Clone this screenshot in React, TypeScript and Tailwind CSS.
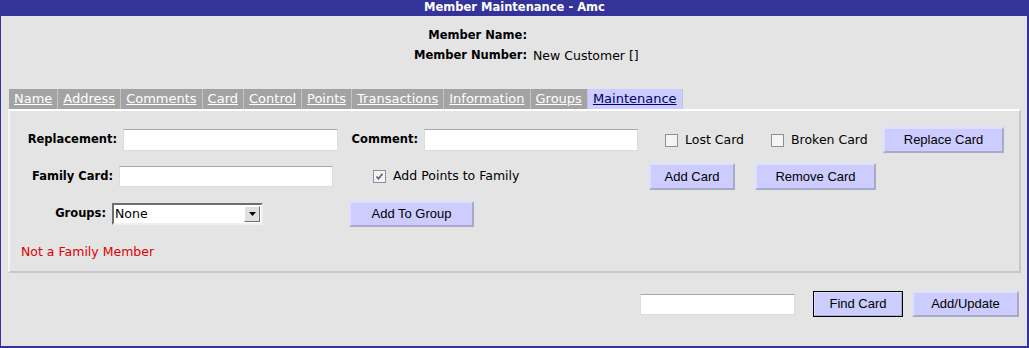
import React from "react";

const tabs = [
  "Name",
  "Address",
  "Comments",
  "Card",
  "Control",
  "Points",
  "Transactions",
  "Information",
  "Groups",
  "Maintenance",
];

const font = { fontFamily: '"DejaVu Sans", Verdana, sans-serif' };

function Btn({ label, w, h, focused }: { label: string; w: string; h: string; focused?: boolean }) {
  return (
    <button
      className={
        "bg-[#ccccff] text-black text-[13px] font-['Liberation_Sans',Arial,sans-serif] border-2 border-t-[#dedeff] border-l-[#dedeff] border-r-[#a9a9c8] border-b-[#a9a9c8] " +
        w +
        " " +
        h +
        (focused ? " outline outline-1 outline-black -outline-offset-1" : "")
      }
    >
      {label}
    </button>
  );
}

function Check({ checked }: { checked?: boolean }) {
  return (
    <span className="w-[13px] h-[13px] border border-[#8f8f8f] bg-[#f4f4f4] flex items-center justify-center shrink-0">
      {checked && (
        <svg width="9" height="9" viewBox="0 0 9 9">
          <path d="M1.5 4.5 L3.5 6.8 L7.5 1.8" stroke="#4a5a8a" strokeWidth="1.6" fill="none" />
        </svg>
      )}
    </span>
  );
}

function TextBox({ w, h }: { w: string; h: string }) {
  return <div className={"bg-white border border-[#dcdcdc] border-t-[#a8a8a8] " + w + " " + h} />;
}

export default function App() {
  return (
    <div className="w-[1029px] h-[348px] bg-[#333399] flex flex-col text-[12.5px] text-black" style={font}>
      <div className="h-[16px] flex items-center justify-center text-white font-bold text-[11.5px]">
        Member Maintenance - Amc
      </div>
      <div className="ml-[1px] mr-[2px] mb-[2px] flex-1 bg-[#e4e4e4] flex flex-col">
        <div className="grid grid-cols-[526px_auto] gap-x-[6px] mt-[10px]">
          <div className="h-[20px] flex items-center justify-end font-bold text-[11.5px]">Member Name:</div>
          <div className="h-[20px]" />
          <div className="h-[20px] flex items-center justify-end font-bold text-[11.5px]">Member Number:</div>
          <div className="h-[20px] flex items-center">New Customer []</div>
        </div>

        <div className="flex ml-[8px] mt-[23px] h-[20px] text-[13px]">
          {tabs.map((t) => {
            const active = t === "Maintenance";
            return (
              <div
                key={t}
                className={
                  "px-[5px] flex items-center underline border-r border-[#c4c4c4] " +
                  (active ? "bg-[#ccccff] text-[#000066]" : "bg-[#a3a3a3] text-white")
                }
              >
                {t}
              </div>
            );
          })}
        </div>

        <div className="ml-[7px] mr-[6px] border-2 border-t-white border-l-[#f4f4f4] border-r-[#c8c8c8] border-b-[#c8c8c8] pt-[16px] pb-[12px]">
          <div className="flex items-center h-[26px]">
            <span className="w-[113px] text-right pr-[6px] font-bold text-[11.5px]">Replacement:</span>
            <TextBox w="w-[215px]" h="h-[22px]" />
            <span className="w-[86px] text-right pr-[6px] font-bold text-[11.5px]">Comment:</span>
            <TextBox w="w-[214px]" h="h-[22px]" />
            <div className="ml-[27px] w-[106px] flex items-center gap-[7px]">
              <Check />
              <span>Lost Card</span>
            </div>
            <div className="w-[112px] flex items-center gap-[7px]">
              <Check />
              <span>Broken Card</span>
            </div>
            <Btn label="Replace Card" w="w-[121px]" h="h-[26px]" />
          </div>

          <div className="flex items-center h-[27px] mt-[10px]">
            <span className="w-[109px] text-right pr-[6px] font-bold text-[11.5px]">Family Card:</span>
            <TextBox w="w-[214px]" h="h-[21px]" />
            <div className="ml-[40px] w-[276px] flex items-center gap-[7px]">
              <Check checked />
              <span>Add Points to Family</span>
            </div>
            <Btn label="Add Card" w="w-[86px]" h="h-[27px]" />
            <div className="ml-[20px]">
              <Btn label="Remove Card" w="w-[121px]" h="h-[27px]" />
            </div>
          </div>

          <div className="flex items-center h-[26px] mt-[11px]">
            <span className="w-[102px] text-right pr-[6px] font-bold text-[11.5px]">Groups:</span>
            <div className="w-[151px] h-[22px] bg-white border-2 border-t-[#6e6e6e] border-l-[#6e6e6e] border-r-[#f0f0f0] border-b-[#f0f0f0] flex items-center">
              <span className="flex-1 pl-[1px] text-[12.5px]">None</span>
              <span className="w-[16px] h-[16px] mr-[1px] bg-[#e0e0e0] border border-t-white border-l-white border-r-[#707070] border-b-[#707070] flex items-center justify-center">
                <svg width="7" height="4" viewBox="0 0 7 4">
                  <path d="M0 0 H7 L3.5 4 Z" fill="#000" />
                </svg>
              </span>
            </div>
            <div className="ml-[86px]">
              <Btn label="Add To Group" w="w-[125px]" h="h-[26px]" />
            </div>
          </div>

          <div className="mt-[18px] ml-[11px] h-[14px] flex items-center text-[#dd0000]">Not a Family Member</div>
        </div>

        <div className="flex items-center justify-end mt-[18px] pr-[8px]">
          <TextBox w="w-[155px]" h="h-[21px]" />
          <div className="ml-[18px]">
            <Btn label="Find Card" w="w-[90px]" h="h-[26px]" focused />
          </div>
          <div className="ml-[9px]">
            <Btn label="Add/Update" w="w-[107px]" h="h-[26px]" />
          </div>
        </div>
      </div>
    </div>
  );
}
